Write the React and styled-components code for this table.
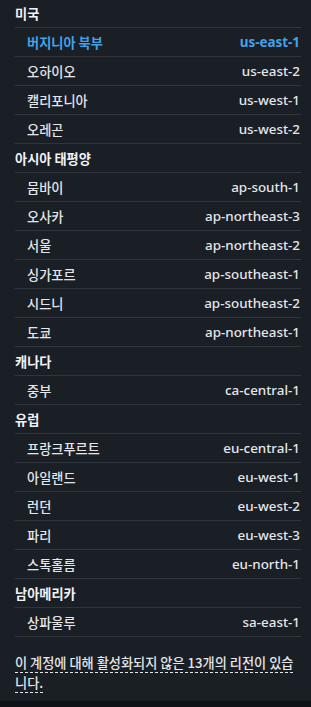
import React from 'react';
import styled, { createGlobalStyle } from 'styled-components';

// Region groups shown in the picker
const regionGroups = [
  {
    name: '미국',
    regions: [
      { label: '버지니아 북부', code: 'us-east-1', selected: true },
      { label: '오하이오', code: 'us-east-2' },
      { label: '캘리포니아', code: 'us-west-1' },
      { label: '오레곤', code: 'us-west-2' }
    ]
  },
  {
    name: '아시아 태평양',
    regions: [
      { label: '뭄바이', code: 'ap-south-1' },
      { label: '오사카', code: 'ap-northeast-3' },
      { label: '서울', code: 'ap-northeast-2' },
      { label: '싱가포르', code: 'ap-southeast-1' },
      { label: '시드니', code: 'ap-southeast-2' },
      { label: '도쿄', code: 'ap-northeast-1' }
    ]
  },
  {
    name: '캐나다',
    regions: [{ label: '중부', code: 'ca-central-1' }]
  },
  {
    name: '유럽',
    regions: [
      { label: '프랑크푸르트', code: 'eu-central-1' },
      { label: '아일랜드', code: 'eu-west-1' },
      { label: '런던', code: 'eu-west-2' },
      { label: '파리', code: 'eu-west-3' },
      { label: '스톡홀름', code: 'eu-north-1' }
    ]
  },
  {
    name: '남아메리카',
    regions: [{ label: '상파울루', code: 'sa-east-1' }]
  }
];

const App = () => (
  <>
    <GlobalStyle />
    <Panel>
      <List>
        {regionGroups.map((group) => (
          <React.Fragment key={group.name}>
            <GroupHeader>{group.name}</GroupHeader>
            {group.regions.map((region) => (
              <RegionRow key={region.code} $selected={region.selected}>
                <RegionName>{region.label}</RegionName>
                <RegionCode>{region.code}</RegionCode>
              </RegionRow>
            ))}
          </React.Fragment>
        ))}
      </List>
      <Note>
        <Dashed>이 계정에 대해 활성화되지 않은 13개의 리전이 있습니다.</Dashed>
      </Note>
    </Panel>
  </>
);

export default App;

// Styled Components

const GlobalStyle = createGlobalStyle`
  html, body {
    margin: 0;
    padding: 0;
    background: #0f1216;
  }
  body {
    font-family: "Noto Sans", "Noto Sans CJK KR", sans-serif;
    overflow: hidden;
  }
`;

const Panel = styled.div`
  width: 311px;
  box-sizing: border-box;
  background: #1a1e25;
  padding: 0 10px 8px 15px;
  overflow: hidden;
`;

const List = styled.div`
  display: flex;
  flex-direction: column;
  margin-top: -1px;
`;

const Row = styled.div`
  height: 28px;
  display: flex;
  align-items: center;
  border-bottom: 1px solid #30353d;
`;

const GroupHeader = styled(Row)`
  font-family: "Noto Sans CJK KR", sans-serif;
  font-size: 13.2px;
  font-weight: 700;
  color: #f2f3f5;
`;

const RegionRow = styled(Row)`
  justify-content: space-between;
  padding: 0 1px 0 12px;
  color: ${(p) => (p.$selected ? '#42a2ea' : '#e4e6e9')};
  font-weight: ${(p) => (p.$selected ? 700 : 500)};
`;

const RegionName = styled.span`
  font-family: "Noto Sans CJK KR", sans-serif;
  font-size: 13.2px;
`;

const RegionCode = styled.span`
  font-family: "Noto Sans", sans-serif;
  font-size: 13.4px;
`;

const Note = styled.p`
  margin: 16px 0 0;
  font-family: "Noto Sans CJK KR", sans-serif;
  font-size: 13.2px;
  font-weight: 500;
  line-height: 20px;
  color: #e4e6e9;
`;

const Dashed = styled.span`
  border-bottom: 1px dashed #e4e6e9;
`;
